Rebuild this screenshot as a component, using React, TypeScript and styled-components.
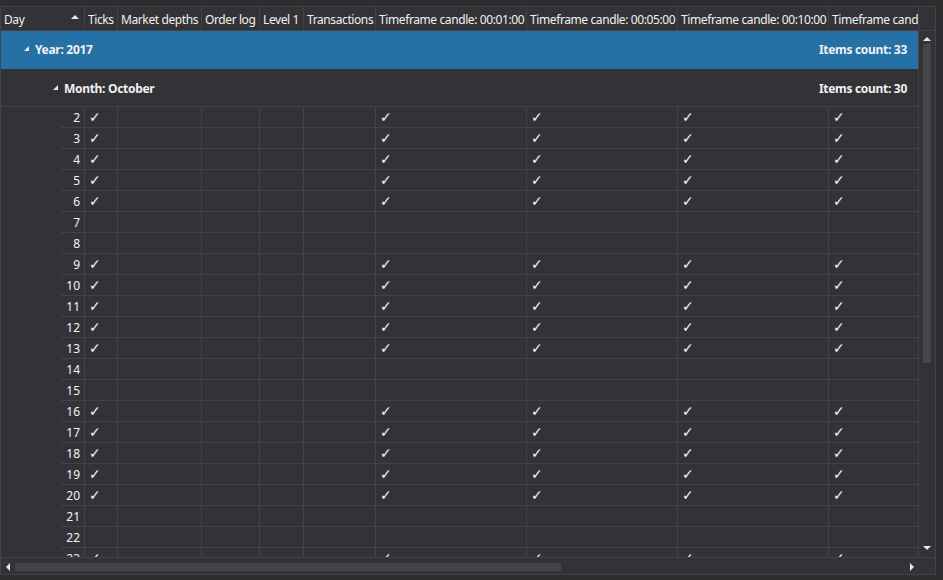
import React from 'react'
import styled, { createGlobalStyle } from 'styled-components'

const GlobalStyle = createGlobalStyle`
  html, body {
    margin: 0;
    padding: 0;
    background: #2d2d30;
    overflow: hidden;
  }
  body {
    font-family: "Segoe UI", "Noto Sans", "Open Sans", sans-serif;
    font-size: 12px;
    color: #f1f1f1;
  }
`

const columns = [
  { title: 'Day', width: 84, checked: false },
  { title: 'Ticks', width: 33, checked: true },
  { title: 'Market depths', width: 84, checked: false },
  { title: 'Order log', width: 58, checked: false },
  { title: 'Level 1', width: 44, checked: false },
  { title: 'Transactions', width: 72, checked: false },
  { title: 'Timeframe candle: 00:01:00', width: 151, checked: true },
  { title: 'Timeframe candle: 00:05:00', width: 151, checked: true },
  { title: 'Timeframe candle: 00:10:00', width: 151, checked: true },
  { title: 'Timeframe candle: 00:15:00', width: 90, checked: true }
]

const emptyDays = [7, 8, 14, 15, 21, 22]
const days = Array.from({ length: 22 }, (_, i) => i + 2)

const INDENT = 60

export default function App() {
  return (
    <>
      <GlobalStyle />
      <Page>
        <Frame>
          <HeaderRow>
            <HeaderCells>
              {columns.map((c, i) => (
                <HeaderCell key={i} $w={c.width}>
                  <HeaderText>{c.title}</HeaderText>
                  {i === 0 && <SortArrow />}
                </HeaderCell>
              ))}
            </HeaderCells>
            <Corner />
          </HeaderRow>

          <Body>
            <Viewport>
              <YearRow>
                <GroupLabel $indent={23}>
                  <Expander />
                  Year: 2017
                </GroupLabel>
                <GroupCount>Items count: 33</GroupCount>
              </YearRow>
              <MonthRow>
                <GroupLabel $indent={52}>
                  <Expander />
                  Month: October
                </GroupLabel>
                <GroupCount>Items count: 30</GroupCount>
              </MonthRow>
              {days.map(d => {
                const has = !emptyDays.includes(d)
                return (
                  <DataRow key={d}>
                    <Indent />
                    <RowCells>
                      {columns.map((c, i) =>
                        i === 0 ? (
                          <DayCell key={i} $w={c.width - INDENT}>{d}</DayCell>
                        ) : (
                          <Cell key={i} $w={c.width}>{has && c.checked ? '✓' : ''}</Cell>
                        )
                      )}
                    </RowCells>
                  </DataRow>
                )
              })}
            </Viewport>
            <VScroll>
              <ArrowUp />
              <VTrack>
                <VThumb />
              </VTrack>
              <ArrowDown />
            </VScroll>
          </Body>

          <HScroll>
            <ArrowLeft />
            <HTrack>
              <HThumb />
            </HTrack>
            <ArrowRight />
          </HScroll>
        </Frame>
      </Page>
    </>
  )
}

const Page = styled.div`
  width: 943px;
  height: 580px;
  padding-top: 6px;
  box-sizing: border-box;
`

const Frame = styled.div`
  width: 936px;
  height: 569px;
  box-sizing: border-box;
  border: 1px solid #434346;
  background: #333337;
  display: flex;
  flex-direction: column;
  overflow: hidden;
`

const HeaderRow = styled.div`
  display: flex;
  height: 24px;
  flex: none;
  border-bottom: 1px solid #434346;
  box-sizing: border-box;
`

const HeaderCells = styled.div`
  display: flex;
  width: 918px;
  flex: none;
`

const HeaderCell = styled.div<{ $w: number }>`
  width: ${p => p.$w}px;
  flex: none;
  box-sizing: border-box;
  border-right: 1px solid #434346;
  display: flex;
  align-items: center;
  padding: 1px 2px 0 3px;
  overflow: hidden;
  white-space: nowrap;
  position: relative;
`

const HeaderText = styled.span`
  color: #f1f1f1;
  letter-spacing: -0.4px;
`

const SortArrow = styled.span`
  position: absolute;
  left: 70px;
  top: 8px;
  width: 0;
  height: 0;
  border-left: 4px solid transparent;
  border-right: 4px solid transparent;
  border-bottom: 4px solid #e8e8e8;
`

const Corner = styled.div`
  flex: 1;
`

const Body = styled.div`
  display: flex;
  height: 526px;
  flex: none;
  border-bottom: 1px solid #434346;
`

const Viewport = styled.div`
  width: 917px;
  flex: none;
  overflow: hidden;
`

const GroupRowBase = styled.div`
  display: flex;
  align-items: center;
  justify-content: space-between;
  font-weight: bold;
  white-space: nowrap;
  box-sizing: border-box;
  letter-spacing: -0.3px;
`

const YearRow = styled(GroupRowBase)`
  height: 38px;
  background: #2570a5;
  padding-bottom: 1px;
`

const MonthRow = styled(GroupRowBase)`
  height: 38px;
  border-bottom: 1px solid #434346;
  padding-top: 1px;
`

const GroupLabel = styled.div<{ $indent: number }>`
  display: flex;
  align-items: center;
  padding-left: ${p => p.$indent}px;
`

const Expander = styled.span`
  width: 0;
  height: 0;
  border-left: 5px solid transparent;
  border-bottom: 5px solid #e8e8e8;
  margin-right: 6px;
  margin-top: -2px;
`

const GroupCount = styled.div`
  padding-right: 11px;
`

const DataRow = styled.div`
  display: flex;
  height: 21px;
`

const Indent = styled.div`
  width: ${INDENT}px;
  flex: none;
`

const RowCells = styled.div`
  display: flex;
  flex: none;
  border-bottom: 1px solid #434346;
`

const Cell = styled.div<{ $w: number }>`
  width: ${p => p.$w}px;
  height: 20px;
  flex: none;
  box-sizing: border-box;
  border-right: 1px solid #434346;
  padding: 0 4px;
  display: flex;
  align-items: center;
  font-family: "DejaVu Sans", sans-serif;
  font-size: 14px;
  color: #f4f4f4;
`

const DayCell = styled(Cell)`
  justify-content: flex-end;
  font-family: "Segoe UI", "Noto Sans", "Open Sans", sans-serif;
  font-size: 12px;
  padding-right: 4px;
`

const VScroll = styled.div`
  flex: 1;
  border-left: 1px solid #434346;
  display: flex;
  flex-direction: column;
  align-items: center;
`

const VTrack = styled.div`
  flex: 1;
  width: 8px;
  padding: 3px 0;
`

const VThumb = styled.div`
  height: 319px;
  background: #46464a;
`

const HScroll = styled.div`
  flex: 1;
  display: flex;
  align-items: center;
  padding: 0 21px 0 5px;
`

const HTrack = styled.div`
  flex: 1;
  height: 8px;
  padding: 0 5px;
  margin-top: 1px;
`

const HThumb = styled.div`
  width: 546px;
  height: 8px;
  background: #434346;
`

const ArrowUp = styled.span`
  margin-top: 6px;
  width: 0;
  height: 0;
  border-left: 4px solid transparent;
  border-right: 4px solid transparent;
  border-bottom: 4px solid #e8e8e8;
`

const ArrowDown = styled.span`
  margin-bottom: 7px;
  width: 0;
  height: 0;
  border-left: 4px solid transparent;
  border-right: 4px solid transparent;
  border-top: 4px solid #e8e8e8;
`

const ArrowLeft = styled.span`
  margin-top: 1px;
  width: 0;
  height: 0;
  border-top: 4px solid transparent;
  border-bottom: 4px solid transparent;
  border-right: 4px solid #e8e8e8;
`

const ArrowRight = styled.span`
  margin-top: 1px;
  width: 0;
  height: 0;
  border-top: 4px solid transparent;
  border-bottom: 4px solid transparent;
  border-left: 4px solid #e8e8e8;
`
